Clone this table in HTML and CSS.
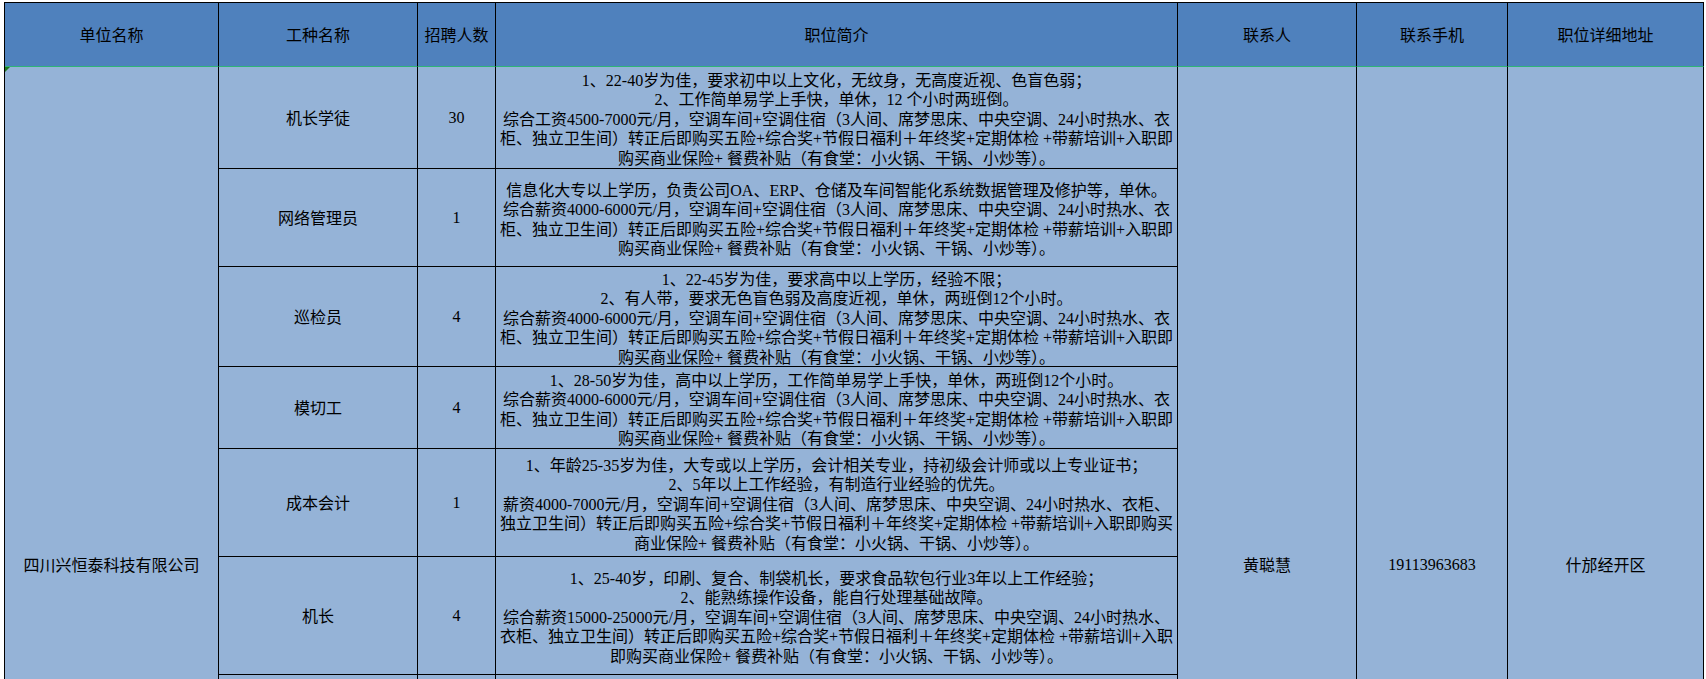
FILE: index.html
```html
<!DOCTYPE html>
<html lang="zh-CN">
<head>
<meta charset="utf-8">
<title>招聘信息</title>
<link rel="stylesheet" href="styles.css">
</head>
<body>
<div class="sheet">
  <div class="cell head">单位名称</div>
  <div class="cell head">工种名称</div>
  <div class="cell head">招聘人数</div>
  <div class="cell head">职位简介</div>
  <div class="cell head">联系人</div>
  <div class="cell head">联系手机</div>
  <div class="cell head">职位详细地址</div>

  <div class="cell merged company"><span class="flag"></span>四川兴恒泰科技有限公司</div>

  <div class="cell r1">机长学徒</div>
  <div class="cell r1 num">30</div>
  <div class="cell r1 desc">
    <div>1、22-40岁为佳，要求初中以上文化，无纹身，无高度近视、色盲色弱；</div>
    <div>2、工作简单易学上手快，单休，12 个小时两班倒。</div>
    <div>综合工资4500-7000元/月，空调车间+空调住宿（3人间、席梦思床、中央空调、24小时热水、衣</div>
    <div>柜、独立卫生间）转正后即购买五险+综合奖+节假日福利＋年终奖+定期体检 +带薪培训+入职即</div>
    <div>购买商业保险+ 餐费补贴（有食堂：小火锅、干锅、小炒等）。</div>
  </div>

  <div class="cell merged contact">黄聪慧</div>
  <div class="cell merged phone num">19113963683</div>
  <div class="cell merged addr">什邡经开区</div>

  <div class="cell r2">网络管理员</div>
  <div class="cell r2 num">1</div>
  <div class="cell r2 desc">
    <div>信息化大专以上学历，负责公司OA、ERP、仓储及车间智能化系统数据管理及修护等，单休。</div>
    <div>综合薪资4000-6000元/月，空调车间+空调住宿（3人间、席梦思床、中央空调、24小时热水、衣</div>
    <div>柜、独立卫生间）转正后即购买五险+综合奖+节假日福利＋年终奖+定期体检 +带薪培训+入职即</div>
    <div>购买商业保险+ 餐费补贴（有食堂：小火锅、干锅、小炒等）。</div>
  </div>

  <div class="cell r3">巡检员</div>
  <div class="cell r3 num">4</div>
  <div class="cell r3 desc">
    <div>1、22-45岁为佳，要求高中以上学历，经验不限；</div>
    <div>2、有人带，要求无色盲色弱及高度近视，单休，两班倒12个小时。</div>
    <div>综合薪资4000-6000元/月，空调车间+空调住宿（3人间、席梦思床、中央空调、24小时热水、衣</div>
    <div>柜、独立卫生间）转正后即购买五险+综合奖+节假日福利＋年终奖+定期体检 +带薪培训+入职即</div>
    <div>购买商业保险+ 餐费补贴（有食堂：小火锅、干锅、小炒等）。</div>
  </div>

  <div class="cell r4">模切工</div>
  <div class="cell r4 num">4</div>
  <div class="cell r4 desc">
    <div>1、28-50岁为佳，高中以上学历，工作简单易学上手快，单休，两班倒12个小时。</div>
    <div>综合薪资4000-6000元/月，空调车间+空调住宿（3人间、席梦思床、中央空调、24小时热水、衣</div>
    <div>柜、独立卫生间）转正后即购买五险+综合奖+节假日福利＋年终奖+定期体检 +带薪培训+入职即</div>
    <div>购买商业保险+ 餐费补贴（有食堂：小火锅、干锅、小炒等）。</div>
  </div>

  <div class="cell r5">成本会计</div>
  <div class="cell r5 num">1</div>
  <div class="cell r5 desc">
    <div>1、年龄25-35岁为佳，大专或以上学历，会计相关专业，持初级会计师或以上专业证书；</div>
    <div>2、5年以上工作经验，有制造行业经验的优先。</div>
    <div>薪资4000-7000元/月，空调车间+空调住宿（3人间、席梦思床、中央空调、24小时热水、衣柜、</div>
    <div>独立卫生间）转正后即购买五险+综合奖+节假日福利＋年终奖+定期体检 +带薪培训+入职即购买</div>
    <div>商业保险+ 餐费补贴（有食堂：小火锅、干锅、小炒等）。</div>
  </div>

  <div class="cell r6">机长</div>
  <div class="cell r6 num">4</div>
  <div class="cell r6 desc">
    <div>1、25-40岁，印刷、复合、制袋机长，要求食品软包行业3年以上工作经验；</div>
    <div>2、能熟练操作设备，能自行处理基础故障。</div>
    <div>综合薪资15000-25000元/月，空调车间+空调住宿（3人间、席梦思床、中央空调、24小时热水、</div>
    <div>衣柜、独立卫生间）转正后即购买五险+综合奖+节假日福利＋年终奖+定期体检 +带薪培训+入职</div>
    <div>即购买商业保险+ 餐费补贴（有食堂：小火锅、干锅、小炒等）。</div>
  </div>

  <div class="cell r7 open"></div>
  <div class="cell r7 open"></div>
  <div class="cell r7 open"></div>
</div>
</body>
</html>
```

FILE: styles.css
```css
html, body {
  margin: 0;
  padding: 0;
  background: #ffffff;
  height: 679px;
  overflow: hidden;
}

body {
  font-family: "Liberation Serif", "Noto Sans CJK SC", serif;
  font-size: 16px;
  color: #000000;
}

.sheet {
  display: grid;
  grid-template-columns: 214px 199px 78px 682px 179px 151px 196px;
  grid-template-rows: 64px 102px 98px 100px 82px 108px 118px 4px;
  margin: 2px 0 0 4px;
  width: 1699px;
  border-top: 1px solid #000;
  border-left: 1px solid #000;
}

.cell {
  box-sizing: border-box;
  border-right: 1px solid #000;
  border-bottom: 1px solid #000;
  background: #95b3d7;
  display: flex;
  align-items: center;
  justify-content: center;
  text-align: center;
  line-height: 19.5px;
  white-space: nowrap;
  font-family: "Noto Sans CJK SC", sans-serif;
}

.head {
  background: #4f81bd;
  border-bottom-color: #2fb477;
  padding-top: 1px;
}

.num {
  font-family: "Liberation Serif", serif;
}

.desc {
  flex-direction: column;
  font-family: "Liberation Serif", "Noto Sans CJK SC", serif;
  padding-top: 4px;
}

.desc > div {
  white-space: nowrap;
}

/* merged cells continue below the visible area; their text sits at the
   vertical middle of the full merged range */
.merged {
  grid-row: 2 / 9;
  position: relative;
  border-bottom: none;
  align-items: flex-start;
  padding-top: 488px;
}

.open {
  border-bottom: none;
}

.company { grid-column: 1; }
.contact { grid-column: 5; }
.phone { grid-column: 6; }
.addr { grid-column: 7; }

.r1 { grid-row: 2; }
.r2 { grid-row: 3; }
.r3 { grid-row: 4; }
.r4 { grid-row: 5; }
.r5 { grid-row: 6; }
.r6 { grid-row: 7; }
.r7 { grid-row: 8; }

.flag {
  position: absolute;
  left: 0;
  top: 0;
  width: 0;
  height: 0;
  border-top: 5px solid #1f7a1f;
  border-right: 5px solid transparent;
}
```
